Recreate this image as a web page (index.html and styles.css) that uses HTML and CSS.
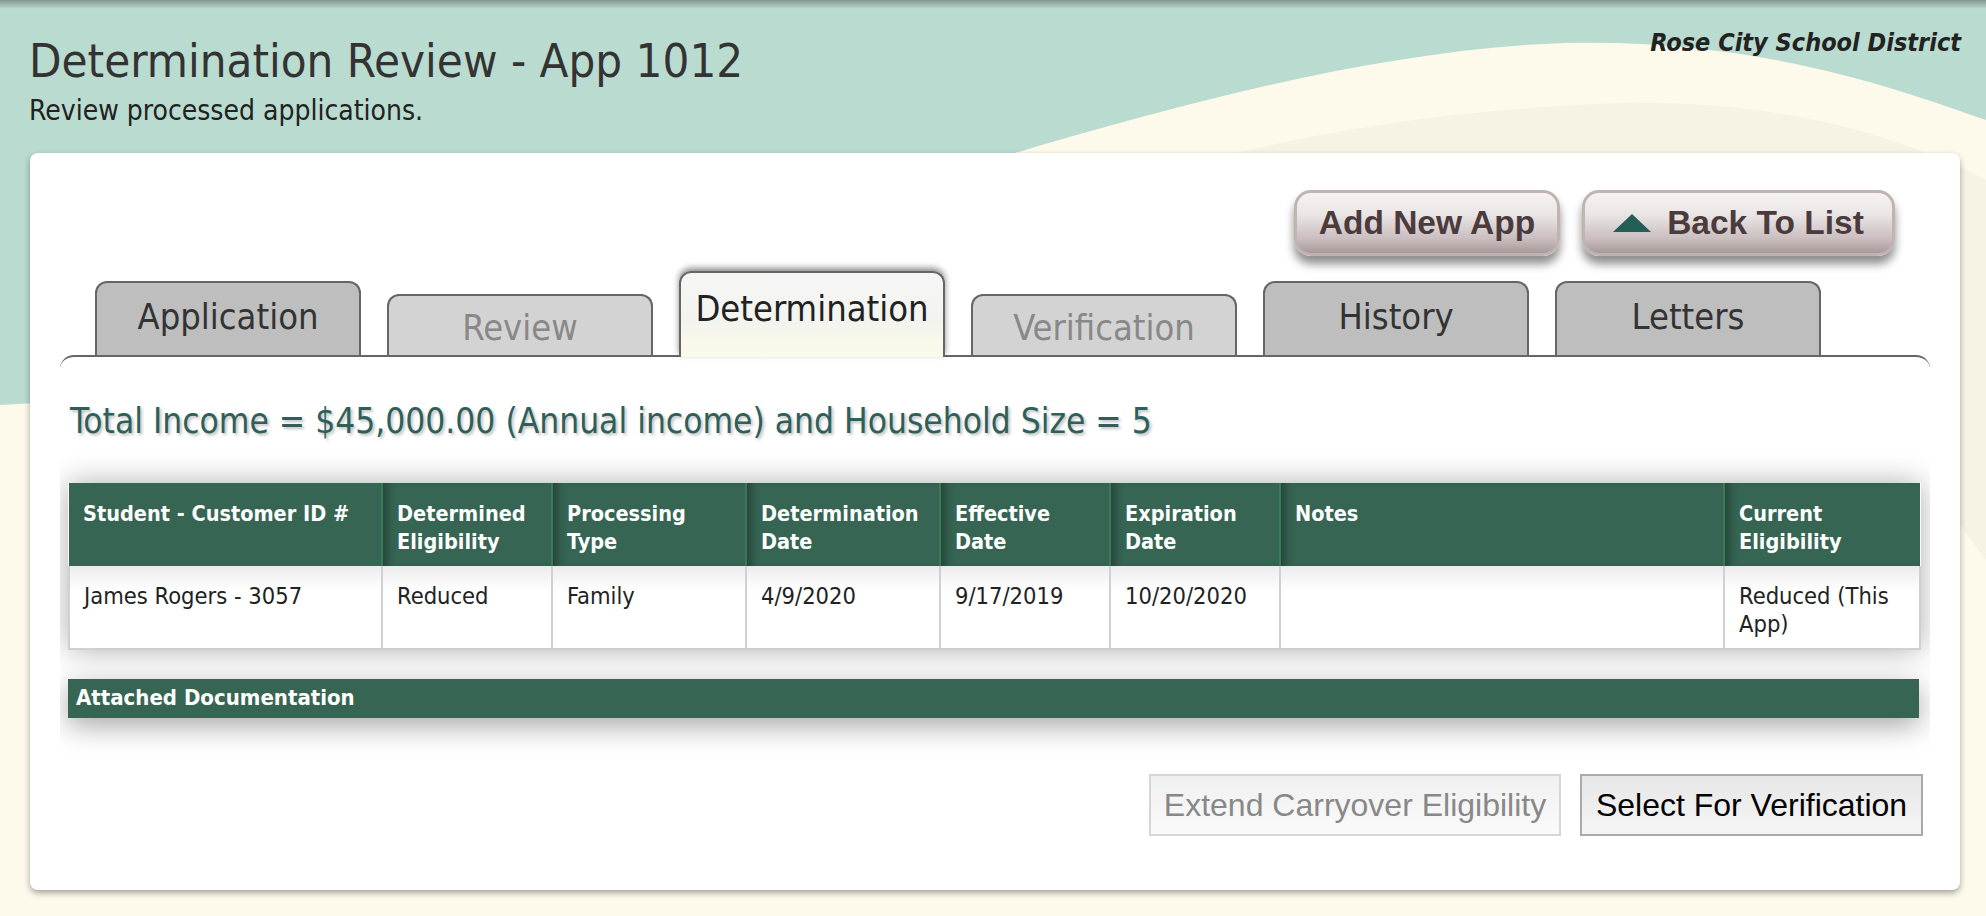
FILE: index.html
```html
<!DOCTYPE html>
<html lang="en">
  <head>
    <meta charset="UTF-8" />
    <meta name="viewport" content="width=device-width, initial-scale=1.0" />
    <title>Determination Review - App 1012</title>
    <link rel="stylesheet" href="styles.css">
  </head>
  <body>
    <svg class="backdrop" viewBox="0 0 1986 916" preserveAspectRatio="none" aria-hidden="true">
      <path d="M0 405 C 500 380, 1100 60, 1563 43 C 1760 38, 1900 90, 1986 120 L1986 916 L0 916 Z" fill="#fdfaec" />
      <path d="M1237 153 C 1350 125, 1480 108, 1620 103 C 1780 100, 1900 135, 1986 180 L1986 560 C 1800 300, 1500 160, 1237 153 Z" fill="#f6f3e4" />
    </svg>

    <header class="page-head">
      <div class="titles">
        <h1>Determination Review - App 1012</h1>
        <p>Review processed applications.</p>
      </div>
      <div class="district">Rose City School District</div>
    </header>

    <main class="card">
      <div class="actions">
        <button class="pill">Add New App</button>
        <button class="pill"><span class="tri"></span>Back To List</button>
      </div>

      <nav class="tabs">
        <a class="tab">Application</a>
        <a class="tab off">Review</a>
        <a class="tab active">Determination</a>
        <a class="tab off">Verification</a>
        <a class="tab">History</a>
        <a class="tab">Letters</a>
      </nav>

      <section class="panel">
        <h2 class="income">Total Income = $45,000.00 (Annual income) and Household Size = 5</h2>

        <table class="grid">
          <colgroup>
            <col style="width: 313px" />
            <col style="width: 170px" />
            <col style="width: 194px" />
            <col style="width: 194px" />
            <col style="width: 170px" />
            <col style="width: 170px" />
            <col style="width: 444px" />
            <col style="width: 196px" />
          </colgroup>
          <thead>
            <tr>
              <th>Student - Customer ID #</th>
              <th>Determined Eligibility</th>
              <th>Processing Type</th>
              <th>Determination Date</th>
              <th>Effective Date</th>
              <th>Expiration Date</th>
              <th>Notes</th>
              <th>Current Eligibility</th>
            </tr>
          </thead>
          <tbody>
            <tr>
              <td>James Rogers - 3057</td>
              <td>Reduced</td>
              <td>Family</td>
              <td>4/9/2020</td>
              <td>9/17/2019</td>
              <td>10/20/2020</td>
              <td></td>
              <td>Reduced (This App)</td>
            </tr>
          </tbody>
        </table>

        <div class="doc-bar">Attached Documentation</div>
      </section>

      <div class="footer-actions">
        <button class="btn muted">Extend Carryover Eligibility</button>
        <button class="btn">Select For Verification</button>
      </div>
    </main>
  </body>
</html>
```

FILE: styles.css
```css
* {
  margin: 0;
  padding: 0;
  box-sizing: border-box;
}
body {
  position: relative;
  height: 916px;
  overflow: hidden;
  background: linear-gradient(#82968f, #badbcf 9px);
  font-family: "DejaVu Sans Condensed", "DejaVu Sans", sans-serif;
  color: #333;
}
.backdrop {
  position: absolute;
  top: 0;
  left: 0;
  width: 1986px;
  height: 916px;
}
.page-head {
  position: relative;
  height: 153px;
  display: flex;
  justify-content: space-between;
  padding: 28px 25px 0 29px;
}
.titles h1 {
  margin-top: 6px;
  font-size: 47px;
  line-height: 54px;
  font-weight: normal;
  color: #333;
}
.titles p {
  margin-top: 8px;
  font-size: 28px;
  line-height: 30px;
  color: #222;
}
.district {
  font-size: 25px;
  line-height: 30px;
  font-weight: bold;
  font-style: italic;
  color: #222;
}

/* main card */
.card {
  position: relative;
  margin: 0 26px 0 30px;
  height: 737px;
  padding-top: 37px;
  background: #fff;
  border-radius: 8px;
  box-shadow: 0 3px 6px rgba(0, 0, 0, 0.35);
}
.actions {
  display: flex;
  justify-content: flex-end;
  gap: 22px;
  padding-right: 65px;
}
.pill {
  display: flex;
  align-items: center;
  justify-content: center;
  gap: 16px;
  height: 66px;
  width: 266px;
  border: 3px solid #c2b3b3;
  border-radius: 17px;
  background: linear-gradient(#f6f3f3, #ebe6e6 35%, #cbbfc0 75%, #a89a9b);
  box-shadow: 0 8px 10px rgba(0, 0, 0, 0.45);
  font-family: "Liberation Sans", Arial, sans-serif;
  font-weight: bold;
  font-size: 33.5px;
  color: #4b3b3d;
}
.pill + .pill {
  width: 313px;
}
.tri {
  width: 0;
  height: 0;
  border-left: 19px solid transparent;
  border-right: 19px solid transparent;
  border-bottom: 18px solid #245f57;
}

/* tabs */
.tabs {
  display: flex;
  align-items: flex-end;
  gap: 26px;
  height: 99px;
  padding-left: 65px;
}
.tab {
  position: relative;
  width: 266px;
  height: 74px;
  padding-top: 14px;
  text-align: center;
  font-size: 36px;
  line-height: 40px;
  color: #333;
  background: #bebebe;
  border: 2px solid #666;
  border-bottom: none;
  border-radius: 12px 12px 0 0;
}
.tab.off {
  height: 61px;
  padding-top: 12px;
  color: #888;
  background: #d3d3d3;
}
.tab.active {
  z-index: 2;
  height: 86px;
  margin-bottom: -2px;
  padding-top: 16px;
  color: #222;
  background: linear-gradient(#f6f6f6, #f3f3ef 55%, #fbfbea);
  box-shadow: 0 -3px 6px rgba(0, 0, 0, 0.45);
}

/* panel */
.panel {
  position: relative;
  margin: 0 30px;
  height: 415px;
  padding: 0 11px 0 8px;
  overflow: hidden;
  border-top: 2px solid #666;
  border-radius: 14px 14px 0 0;
}
.income {
  margin-top: 44px;
  padding-left: 2px;
  font-size: 35px;
  line-height: 40px;
  font-weight: normal;
  color: #2e5f5a;
  text-shadow: 2px 2px 3px rgba(0, 0, 0, 0.25);
}
.grid {
  margin-top: 42px;
  width: 1851px;
  table-layout: fixed;
  border-collapse: collapse;
  box-shadow: 0 0 28px rgba(0, 0, 0, 0.32);
}
.grid th,
.grid td {
  vertical-align: top;
  text-align: left;
  padding: 17px 14px 0;
  line-height: 28px;
}
.grid th {
  height: 83px;
  font-size: 21.5px;
  color: #fff;
  background: #366553;
  border-left: 2px solid #3a7a58;
  box-shadow: inset 10px 0 10px -6px rgba(0, 0, 0, 0.35);
}
.grid th:first-child {
  border-left: none;
  box-shadow: none;
}
.grid td {
  height: 83px;
  padding-top: 16px;
  font-size: 23.5px;
  color: #222;
  background: linear-gradient(#ececec, #fff 30%);
  border: 2px solid #d0d0d0;
  border-top: none;
}
.doc-bar {
  margin-top: 29px;
  width: 1851px;
  height: 39px;
  padding: 3px 8px 0;
  font-size: 22px;
  line-height: 32px;
  font-weight: bold;
  color: #fff;
  background: #366553;
  box-shadow: 0 8px 28px rgba(0, 0, 0, 0.35);
}

/* bottom buttons */
.footer-actions {
  display: flex;
  justify-content: flex-end;
  gap: 19px;
  margin-top: 4px;
  padding-right: 37px;
}
.btn {
  height: 62px;
  width: 343px;
  font-family: "Liberation Sans", Arial, sans-serif;
  font-size: 32px;
  color: #000;
  background: linear-gradient(#e6e6e6, #f6f6f6);
  border: 2px solid #aaa;
}
.btn.muted {
  width: 412px;
  color: #888;
  background: linear-gradient(#f0f0f0, #fafafa);
  border-color: #d6d6d6;
}
```
